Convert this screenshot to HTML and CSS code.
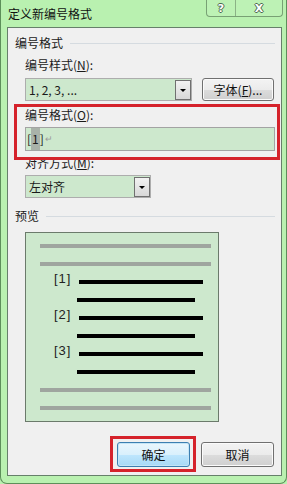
FILE: index.html
```html
<!DOCTYPE html>
<html lang="zh-CN">
<head>
<meta charset="UTF-8">
<title>定义新编号格式</title>
<link rel="stylesheet" href="styles.css">
</head>
<body>
<div class="window">
    <div class="titlebar">
        <span class="title">定义新编号格式</span>
        <div class="caption-btns">
            <span class="cap-btn help">?</span>
            <span class="cap-btn close">X</span>
        </div>
    </div>

    <div class="panel">
        <div class="group-head"><span>编号格式</span><i class="rule"></i></div>

        <div class="label">编号样式(<u>N</u>):</div>
        <div class="row">
            <div class="select style-select">
                <span class="select-text">1, 2, 3, ...</span>
                <span class="drop"><i class="tri"></i></span>
            </div>
            <button class="btn font-btn">字体(<u>F</u>)...</button>
        </div>

        <div class="label mt6">编号格式(<u>O</u>):</div>
        <div class="input"><span>[</span><span class="sel">1</span><span>]</span><span class="ret">↵</span></div>

        <div class="label mt4">对齐方式(<u>M</u>):</div>
        <div class="select align-select">
            <span class="select-text">左对齐</span>
            <span class="drop"><i class="tri"></i></span>
        </div>

        <div class="group-head preview-head"><span>预览</span><i class="rule"></i></div>

        <div class="preview">
            <div class="pline gray"></div>
            <div class="pline gray"></div>
            <div class="pline num-row"><span class="num">[1]</span><i class="black long"></i></div>
            <div class="pline"><i class="black short"></i></div>
            <div class="pline num-row"><span class="num">[2]</span><i class="black long"></i></div>
            <div class="pline"><i class="black short"></i></div>
            <div class="pline num-row"><span class="num">[3]</span><i class="black long"></i></div>
            <div class="pline"><i class="black short"></i></div>
            <div class="pline gray"></div>
            <div class="pline gray"></div>
        </div>

        <div class="footer">
            <button class="btn ok-btn">确定</button>
            <button class="btn">取消</button>
        </div>

        <!-- annotation boxes drawn over the dialog -->
        <div class="mark mark-format"></div>
        <div class="mark mark-ok"></div>
    </div>
</div>
</body>
</html>
```

FILE: styles.css
```css
html, body {
    margin: 0;
    padding: 0;
}

body {
    width: 287px;
    height: 484px;
    background: #b9f1b0;
    font-family: "Noto Sans CJK SC", "Noto Sans", sans-serif;
    font-size: 12px;
    color: #1a1a1a;
}

.window {
    box-sizing: border-box;
    height: 484px;
    border: 1px solid #5d8f5a;
    border-top: none;
    border-radius: 0 0 7px 7px;
    background: #b9f1b0;
    display: flex;
    flex-direction: column;
}

/* title bar */
.titlebar {
    height: 27px;
    display: flex;
    justify-content: space-between;
    align-items: flex-start;
    padding-left: 7px;
}

.title {
    line-height: 27px;
    font-size: 12px;
    color: #111;
}

.caption-btns {
    display: flex;
    margin-right: 3px;
    height: 16px;
    border: 1px solid #78a174;
    border-top: none;
    border-radius: 0 0 4px 4px;
    background: #bdf2b5;
}

.cap-btn {
    display: flex;
    align-items: center;
    justify-content: center;
    font-family: "DejaVu Sans", sans-serif;
    font-weight: bold;
    font-size: 11px;
    color: #fff;
    text-shadow: 1px 0 0 #4d6a50, -1px 0 0 #4d6a50, 0 1px 0 #4d6a50, 0 -1px 0 #4d6a50;
}

.help {
    width: 28px;
    border-right: 1px solid #8bb286;
}

.close {
    width: 46px;
}

/* content */
.panel {
    flex: 1;
    position: relative;
    margin: 0 4px 7px 6px;
    border: 1px solid #66806a;
    background: #f0f0f0;
    padding: 7px 6px 8px 7px;
}

.group-head {
    display: flex;
    align-items: center;
    height: 16px;
    line-height: 16px;
}

.group-head .rule {
    flex: 1;
    margin-left: 7px;
    border-top: 1px solid #d5dbe0;
}

.label {
    height: 16px;
    line-height: 16px;
    margin-top: 6px;
    margin-left: 10px;
}

.mt6 { margin-top: 6px; }
.mt4 { margin-top: 4px; }

.row {
    display: flex;
    margin-top: 5px;
    margin-left: 10px;
}

.select {
    box-sizing: border-box;
    height: 23px;
    display: flex;
    justify-content: space-between;
    border: 1px solid #adadad;
    background: #cde8cd;
}

.style-select {
    width: 167px;
}

.align-select {
    width: 126px;
    margin-top: 4px;
    margin-left: 10px;
}

.select-text {
    padding-left: 3px;
    line-height: 21px;
}

.drop {
    box-sizing: border-box;
    width: 16px;
    margin-top: 1px;
    height: 20px;
    border: 1px solid #707070;
    background: linear-gradient(#f2f2f2, #d8d8d8);
    display: flex;
    align-items: center;
    justify-content: center;
}

.tri {
    width: 0;
    height: 0;
    border-left: 3px solid transparent;
    border-right: 3px solid transparent;
    border-top: 3px solid #000;
}

.btn {
    box-sizing: border-box;
    height: 23px;
    width: 72px;
    border: 1px solid #707070;
    border-radius: 3px;
    background: linear-gradient(#f3f3f3 0%, #ebebeb 50%, #dcdcdc 52%, #cfcfcf 100%);
    font-family: "Noto Sans CJK SC", sans-serif;
    font-size: 12px;
    color: #111;
    padding: 0;
    box-shadow: inset 0 0 0 1px #fbfbfb;
}

.font-btn {
    margin-left: 10px;
}

.input {
    box-sizing: border-box;
    height: 24px;
    width: 250px;
    margin-top: 4px;
    margin-left: 10px;
    border: 1px solid #a3a3a3;
    background: #cde8cd;
    padding-left: 1px;
    line-height: 22px;
    display: flex;
    align-items: center;
}

.input .sel {
    background: #a9b2a9;
    padding: 0 1px;
}

.ret {
    color: #9a9a9a;
    font-size: 9px;
    margin-left: 1px;
}

.preview-head {
    margin-top: 10px;
}

.preview {
    box-sizing: border-box;
    width: 194px;
    height: 190px;
    margin-top: 8px;
    margin-left: 10px;
    border: 1px solid #6b7a6b;
    background: #cde8cd;
    padding: 11px 0;
    display: flex;
    flex-direction: column;
    gap: 14px;
}

.pline {
    height: 4px;
    display: flex;
    align-items: center;
}

.gray {
    margin-left: 14px;
    width: 171px;
    background: #9fa59f;
}

.num {
    width: 25px;
    margin-left: 28px;
    position: relative;
    top: -3px;
    font-family: "Liberation Sans", sans-serif;
    font-size: 13px;
    line-height: 4px;
    letter-spacing: 1px;
    color: #222;
}

.black {
    display: block;
    height: 4px;
    background: #000;
}

.long {
    width: 124px;
}

.short {
    width: 118px;
    margin-left: 51px;
}

.footer {
    display: flex;
    justify-content: flex-end;
    gap: 11px;
    margin-top: 20px;
    margin-right: 1px;
}

.footer .btn {
    height: 25px;
    width: 73px;
}

.ok-btn {
    border-color: #3c7fb1;
    background: linear-gradient(#eaf6fd 0%, #d9f0fc 50%, #bee6fd 52%, #a7d9f5 100%);
    box-shadow: inset 0 0 0 1px #c4e5f6;
}

/* red highlight boxes */
.mark {
    position: absolute;
    border: 3px solid #d5222b;
}

.mark-format {
    left: 6px;
    top: 76px;
    width: 260px;
    height: 50px;
}

.mark-ok {
    left: 102px;
    top: 408px;
    width: 80px;
    height: 30px;
}
```
